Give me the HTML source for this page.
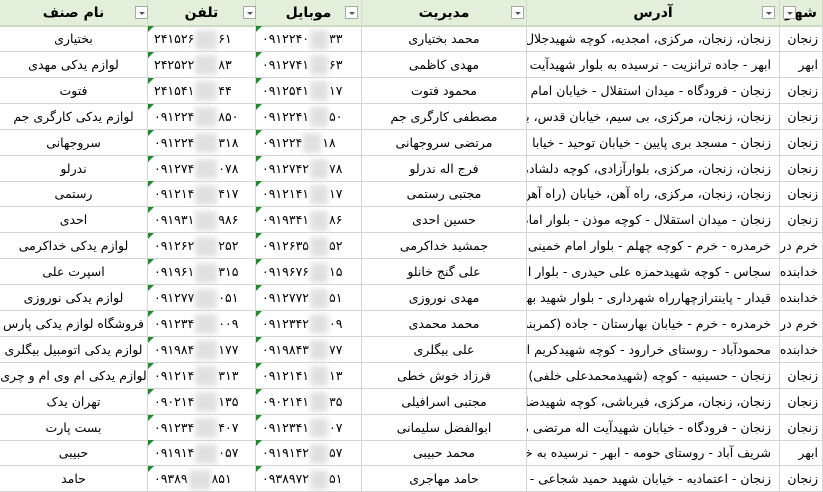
<!DOCTYPE html>
<html><head><meta charset="utf-8"><style>
body{margin:0;width:823px;height:492px;overflow:hidden;background:#fff;font-family:"DejaVu Sans","Liberation Sans",sans-serif;}
.hd{position:absolute;top:0;left:0;width:823px;height:26px;background:#e2efda;border-bottom:1px solid #c9d6c0;}
.c{position:absolute;height:26px;line-height:26px;font-size:12.5px;color:#000;box-sizing:border-box;border-right:1px solid #d4d4d4;border-bottom:1px solid #d4d4d4;overflow:hidden;white-space:nowrap;}
.h{font-weight:bold;font-size:14px;text-align:center;border-color:#d0dcc8;}
.dd{position:absolute;top:6px;width:13px;height:13px;background:#fff;border:1px solid #a8a8a8;box-sizing:border-box;}
.dd:after{content:"";position:absolute;left:3px;top:5px;border-left:3px solid transparent;border-right:3px solid transparent;border-top:3px solid #555;}
.r{direction:rtl;text-align:right;padding-right:8px}
.ct{direction:rtl;text-align:right;padding-right:4px}
.m{text-align:center;direction:rtl}
.p{direction:ltr;text-align:left;padding-left:6px}
.tri{position:absolute;left:0;top:0;border-top:6px solid #1f8a2e;border-right:6px solid transparent;}
.bl{display:inline-block;width:22px;height:20px;vertical-align:middle;background:#e0e0e0;filter:blur(3px);margin:0 1px}
</style></head><body>
<div class="hd"></div>
<div id="t"></div>
<script>
var cols=[[0,148],[148,256],[256,362],[362,527],[527,780],[780,823]];
var H=[["نام صنف",135],["تلفن",243],["موبایل",345],["مدیریت",511],["آدرس",762],["شهر",783]];
var rows=[
["بختیاری","۲۴۱۵۲۶","۶۱","۰۹۱۲۲۴۰","۳۳","محمد بختیاری","زنجان، زنجان، مرکزی، امجدیه، کوچه شهیدجلال د","زنجان"],
["لوازم یدکی مهدی","۲۴۲۵۲۲","۸۳","۰۹۱۲۷۴۱","۶۳","مهدی کاظمی","ابهر - جاده ترانزیت - نرسیده به بلوار شهیدآیت اله","ابهر"],
["فتوت","۲۴۱۵۴۱","۴۴","۰۹۱۲۵۴۱","۱۷","محمود فتوت","زنجان - فرودگاه - میدان استقلال - خیابان امام خم","زنجان"],
["لوازم یدکی کارگری جم","۰۹۱۲۲۴","۸۵۰","۰۹۱۲۲۴۱","۵۰","مصطفی کارگری جم","زنجان، زنجان، مرکزی، بی سیم، خیابان قدس، بلوا","زنجان"],
["سروجهانی","۰۹۱۲۲۴","۳۱۸","۰۹۱۲۲۴","۱۸","مرتضی سروجهانی","زنجان - مسجد بری پایین - خیابان توحید - خیابا","زنجان"],
["ندرلو","۰۹۱۲۷۴","۰۷۸","۰۹۱۲۷۴۲","۷۸","فرج اله ندرلو","زنجان، زنجان، مرکزی، بلوارآزادی، کوچه دلشاد، خ","زنجان"],
["رستمی","۰۹۱۲۱۴","۴۱۷","۰۹۱۲۱۴۱","۱۷","مجتبی رستمی","زنجان، زنجان، مرکزی، راه آهن، خیابان (راه آهن)،","زنجان"],
["احدی","۰۹۱۹۳۱","۹۸۶","۰۹۱۹۳۴۱","۸۶","حسین احدی","زنجان - میدان استقلال - کوچه موذن - بلوار امام","زنجان"],
["لوازم یدکی خداکرمی","۰۹۱۲۶۲","۲۵۲","۰۹۱۲۶۳۵","۵۲","جمشید خداکرمی","خرمدره - خرم - کوچه چهلم - بلوار امام خمینی -","خرم دره"],
["اسپرت علی","۰۹۱۹۶۱","۳۱۵","۰۹۱۹۶۷۶","۱۵","علی گنج خانلو","سجاس - کوچه شهیدحمزه علی حیدری - بلوار امام","خدابنده"],
["لوازم یدکی نوروزی","۰۹۱۲۷۷","۰۵۱","۰۹۱۲۷۷۲","۵۱","مهدی نوروزی","قیدار - پاینترازچهارراه شهرداری - بلوار شهید بهشتی","خدابنده"],
["فروشگاه لوازم یدکی پارس","۰۹۱۲۳۴","۰۰۹","۰۹۱۲۳۴۲","۰۹","محمد محمدی","خرمدره - خرم - خیابان بهارستان - جاده (کمربندی","خرم دره"],
["لوازم یدکی اتومبیل بیگلری","۰۹۱۹۸۴","۱۷۷","۰۹۱۹۸۴۳","۷۷","علی بیگلری","محمودآباد - روستای خرارود - کوچه شهیدکریم اله","خدابنده"],
["لوازم یدکی ام وی ام و چری","۰۹۱۲۱۴","۳۱۳","۰۹۱۲۱۴۱","۱۳","فرزاد خوش خطی","زنجان - حسینیه - کوچه (شهیدمحمدعلی خلفی) -","زنجان"],
["تهران یدک","۰۹۰۲۱۴","۱۳۵","۰۹۰۲۱۴۱","۳۵","مجتبی اسرافیلی","زنجان، زنجان، مرکزی، فیرباشی، کوچه شهیدضاما","زنجان"],
["بست پارت","۰۹۱۲۳۴","۴۰۷","۰۹۱۲۳۴۱","۰۷","ابوالفضل سلیمانی","زنجان - فرودگاه - خیابان شهیدآیت اله مرتضی مط","زنجان"],
["حبیبی","۰۹۱۹۱۴","۰۵۷","۰۹۱۹۱۴۲","۵۷","محمد حبیبی","شریف آباد - روستای حومه - ابهر - نرسیده به خیابا","ابهر"],
["حامد","۰۹۳۸۹","۸۵۱","۰۹۳۸۹۷۲","۵۱","حامد مهاجری","زنجان - اعتمادیه - خیابان شهید حمید شجاعی -","زنجان"]];
var h="";
for(var i=0;i<6;i++){h+='<div class="c h" style="top:0;left:'+cols[i][0]+'px;width:'+(cols[i][1]-cols[i][0])+'px;background:#e2efda">'+H[i][0]+'</div><div class="dd" style="left:'+H[i][1]+'px"></div>';}
for(var r=0;r<rows.length;r++){var d=rows[r],y=26+r*25.9;
function cell(i,cls,inner){return '<div class="c '+cls+'" style="top:'+y+'px;left:'+cols[i][0]+'px;width:'+(cols[i][1]-cols[i][0])+'px">'+inner+'</div>';}
h+=cell(0,"m",d[0]);
h+=cell(1,"p",'<span class="tri"></span>'+d[1]+'<span class="bl"></span>'+d[2]);
h+=cell(2,"p",'<span class="tri"></span>'+d[3]+'<span class="bl" style="width:18px"></span>'+d[4]);
h+=cell(3,"m",d[5]);
h+=cell(4,"r",d[6]);
h+=cell(5,"ct",d[7]);
}
document.getElementById("t").innerHTML=h;
</script>
</body></html>
